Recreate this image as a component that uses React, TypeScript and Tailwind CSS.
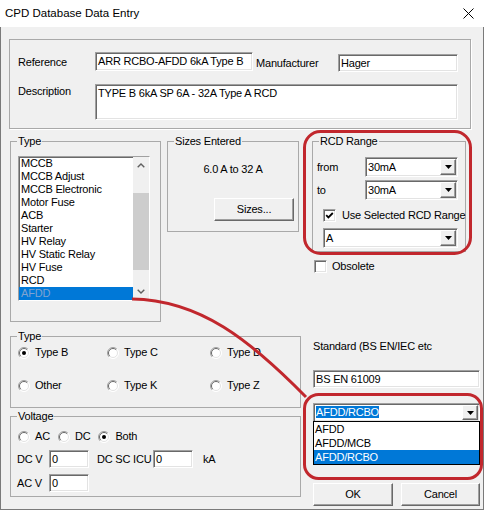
import React from "react";

const sunken =
  "border border-t-[#a0a0a0] border-l-[#a0a0a0] border-b-white border-r-white shadow-[inset_1px_1px_0_#696969,inset_-1px_-1px_0_#e3e3e3]";
const raised =
  "border border-t-white border-l-white border-r-[#696969] border-b-[#696969] shadow-[inset_-1px_-1px_0_#a0a0a0]";

const listItems = [
  "MCCB",
  "MCCB Adjust",
  "MCCB Electronic",
  "Motor Fuse",
  "ACB",
  "Starter",
  "HV Relay",
  "HV Static Relay",
  "HV Fuse",
  "RCD",
];

function Group({
  label,
  className = "",
  children,
}: {
  label?: string;
  className?: string;
  children?: React.ReactNode;
}) {
  return (
    <fieldset className={`border border-[#a9a9a9] ${className}`}>
      {label && <legend className="ml-[6px] px-[1px] leading-[13px]">{label}</legend>}
      {children}
    </fieldset>
  );
}

function TextBox({ className = "", value }: { className?: string; value: string }) {
  return (
    <div className={`${sunken} bg-white flex items-center pl-[2px] whitespace-nowrap overflow-hidden ${className}`}>
      {value}
    </div>
  );
}

function DropButton() {
  return (
    <div className={`${raised} w-[16px] h-full bg-[#f0f0f0] flex items-center justify-center`}>
      <svg width="7" height="4" viewBox="0 0 7 4">
        <path d="M0 0H7L3.5 4Z" fill="#000" />
      </svg>
    </div>
  );
}

function Combo({ className = "", value, selected }: { className?: string; value: string; selected?: boolean }) {
  return (
    <div className={`${sunken} bg-white flex items-center p-[1px] ${className}`}>
      <div className="flex-1 pl-[1px] whitespace-nowrap">
        {selected ? <span className="bg-[#0078d7] text-white">{value}</span> : value}
      </div>
      <DropButton />
    </div>
  );
}

function Radio({ checked }: { checked?: boolean }) {
  return (
    <svg width="12" height="12" viewBox="0 0 12 12" className="shrink-0">
      <circle cx="6" cy="6" r="5.5" fill="#fff" />
      <path d="M9.9 2.1A5.5 5.5 0 0 0 2.1 9.9" stroke="#a0a0a0" fill="none" />
      <path d="M2.1 9.9A5.5 5.5 0 0 0 9.9 2.1" stroke="#ffffff" fill="none" />
      <path d="M9.2 2.8A4.5 4.5 0 0 0 2.8 9.2" stroke="#696969" fill="none" />
      <path d="M2.8 9.2A4.5 4.5 0 0 0 9.2 2.8" stroke="#e3e3e3" fill="none" />
      {checked && <circle cx="6" cy="6" r="2" fill="#000" />}
    </svg>
  );
}

function RadioItem({ label, checked, className = "" }: { label: string; checked?: boolean; className?: string }) {
  return (
    <div className={`flex items-center gap-[5px] h-[13px] whitespace-nowrap ${className}`}>
      <Radio checked={checked} />
      <span>{label}</span>
    </div>
  );
}

function CheckBox({ checked }: { checked?: boolean }) {
  return (
    <div className={`${sunken} bg-white w-[13px] h-[13px] shrink-0 flex items-center justify-center`}>
      {checked && (
        <svg width="9" height="9" viewBox="0 0 9 9">
          <path d="M1.2 4.2L3.4 6.4L7.8 2" stroke="#000" strokeWidth="1.8" fill="none" />
        </svg>
      )}
    </div>
  );
}

function Button({ label, className = "" }: { label: string; className?: string }) {
  return (
    <div className={`${raised} bg-[#f0f0f0] h-[23px] flex items-center justify-center ${className}`}>{label}</div>
  );
}

function ListBox() {
  return (
    <div className={`${sunken} bg-white w-[132px] h-[145px] flex`}>
      <div className="flex-1 flex flex-col">
        {listItems.map((item) => (
          <div key={item} className="h-[13px] leading-[13px] pl-[2px] whitespace-nowrap">
            {item}
          </div>
        ))}
        <div className="h-[13px] leading-[13px] pl-[2px] bg-[#0078d7] text-[#7fa3cf]">AFDD</div>
      </div>
      <div className="w-[16px] bg-[#f0f0f0] flex flex-col">
        <div className="h-[17px] flex items-center justify-center">
          <svg width="8" height="5" viewBox="0 0 8 5">
            <path d="M0.7 4.3L4 1L7.3 4.3" stroke="#606060" strokeWidth="1.4" fill="none" />
          </svg>
        </div>
        <div className="h-[19px]" />
        <div className="h-[77px] bg-[#cdcdcd]" />
        <div className="flex-1" />
        <div className="h-[17px] flex items-center justify-center">
          <svg width="8" height="5" viewBox="0 0 8 5">
            <path d="M0.7 0.7L4 4L7.3 0.7" stroke="#606060" strokeWidth="1.4" fill="none" />
          </svg>
        </div>
      </div>
    </div>
  );
}

export default function App() {
  return (
    <div className="relative w-[484px] h-[510px] flex flex-col overflow-hidden text-[11px] leading-[13px] tracking-[-0.2px] text-black font-['Liberation_Sans',Arial,sans-serif]">
      {/* title bar */}
      <div className="h-[27px] bg-white flex items-center justify-between pl-[5px] pr-[10px]">
        <span className="text-[11.5px] tracking-normal">CPD Database Data Entry</span>
        <svg width="11" height="11" viewBox="0 0 11 11">
          <path d="M0.5 0.5L10.5 10.5M10.5 0.5L0.5 10.5" stroke="#000" strokeWidth="1" />
        </svg>
      </div>

      <div className="flex-1 bg-[#f0f0f0] border-l border-r border-b border-[#7a7a7a] pl-[8px]">
        {/* reference / description */}
        <div className="mt-[12px] w-[462px] h-[90px] border border-[#a9a9a9] shadow-[1px_1px_0_white] pl-[8px] pt-[12px]">
          <div className="flex items-start">
            <div className="w-[77px] mt-[4px]">Reference</div>
            <TextBox className="w-[158px] h-[19px]" value="ARR RCBO-AFDD 6kA Type B" />
            <div className="ml-[3px] w-[82px] mt-[5px]">Manufacturer</div>
            <TextBox className="w-[120px] h-[18px] mt-[2px]" value="Hager" />
          </div>
          <div className="flex items-start mt-[12px]">
            <div className="w-[77px] mt-[1px]">Description</div>
            <div className={`${sunken} bg-white w-[363px] h-[36px] pl-[2px] pt-[2px]`}>
              TYPE B 6kA SP 6A - 32A Type A RCD
            </div>
          </div>
        </div>

        {/* type list, sizes, rcd range */}
        <div className="flex items-start mt-[6px] ml-[1px]">
          <Group label="Type" className="w-[151px] h-[187px]">
            <div className="pl-[7px] pt-[8px]">
              <ListBox />
            </div>
          </Group>

          <Group label="Sizes Entered" className="ml-[6px] w-[132px] h-[97px]">
            <div className="flex flex-col items-center">
              <div className="mt-[15px]">6.0 A to 32 A</div>
              <Button label="Sizes..." className="mt-[22px] w-[80px] self-end mr-[4px]" />
            </div>
          </Group>

          <div className="ml-[13px] flex flex-col">
            <Group label="RCD Range" className="w-[154px] h-[117px]">
              <div className="pl-[4px] pt-[9px]">
                <div className="flex items-center">
                  <div className="w-[48px]">from</div>
                  <Combo className="w-[93px] h-[20px]" value="30mA" />
                </div>
                <div className="flex items-center mt-[3px]">
                  <div className="w-[48px]">to</div>
                  <Combo className="w-[93px] h-[20px]" value="30mA" />
                </div>
                <div className="flex items-center gap-[6px] mt-[9px] ml-[6px] h-[13px] whitespace-nowrap">
                  <CheckBox checked />
                  <span>Use Selected RCD Range</span>
                </div>
                <Combo className="mt-[6px] ml-[6px] w-[135px] h-[20px]" value="A" />
              </div>
            </Group>
            <div className="flex items-center gap-[5px] mt-[8px] ml-[2px] h-[13px]">
              <CheckBox />
              <span>Obsolete</span>
            </div>
          </div>
        </div>

        {/* type radios, voltage, standard */}
        <div className="flex items-start mt-[8px] ml-[1px]">
          <div className="w-[291px] flex flex-col">
            <Group label="Type" className="h-[78px]">
              <div className="pl-[7px] pt-[3px] grid grid-cols-[89px_103px_80px] gap-y-[20px]">
                <RadioItem label="Type B" checked />
                <RadioItem label="Type C" />
                <RadioItem label="Type D" />
                <RadioItem label="Other" />
                <RadioItem label="Type K" />
                <RadioItem label="Type Z" />
              </div>
            </Group>

            <Group label="Voltage" className="mt-[2px] h-[87px]">
              <div className="pl-[7px] pt-[7px]">
                <div className="flex items-center">
                  <RadioItem label="AC" />
                  <RadioItem label="DC" className="ml-[8px]" />
                  <RadioItem label="Both" checked className="ml-[8px]" />
                </div>
                <div className="flex items-center mt-[7px] ml-[-1px] whitespace-nowrap">
                  <div className="w-[32px] shrink-0">DC V</div>
                  <TextBox className="w-[40px] h-[18px] shrink-0" value="0" />
                  <div className="ml-[8px] w-[56px] shrink-0">DC SC ICU</div>
                  <TextBox className="w-[40px] h-[18px] shrink-0" value="0" />
                  <div className="ml-[10px]">kA</div>
                </div>
                <div className="flex items-center mt-[6px] ml-[-1px] whitespace-nowrap">
                  <div className="w-[32px] shrink-0">AC V</div>
                  <TextBox className="w-[40px] h-[18px] shrink-0" value="0" />
                </div>
              </div>
            </Group>
          </div>

          <div className="ml-[11px] pl-[1px] w-[168px] flex flex-col">
            <div className="mt-[10px] whitespace-nowrap">Standard (BS EN/IEC etc</div>
            <TextBox className="mt-[17px] w-[167px] h-[18px]" value="BS EN 61009" />
            <Combo className="mt-[15px] w-[167px] h-[19px]" value="AFDD/RCBO" selected />
            <div className="mt-[-1px] w-[167px] h-[44px] border border-black bg-white">
              <div className="h-[14px] leading-[14px] pl-[1px]">AFDD</div>
              <div className="h-[14px] leading-[14px] pl-[1px]">AFDD/MCB</div>
              <div className="h-[14px] leading-[14px] pl-[1px] bg-[#0078d7] text-white">AFDD/RCBO</div>
            </div>
            <div className="flex gap-[8px] mt-[18px]">
              <Button label="OK" className="w-[80px]" />
              <Button label="Cancel" className="w-[79px]" />
            </div>
          </div>
        </div>
      </div>

      {/* red annotations */}
      <svg className="absolute left-0 top-0 pointer-events-none" width="484" height="510" viewBox="0 0 484 510">
        <rect x="304.5" y="131.5" width="166" height="122" rx="16" fill="none" stroke="#c1272d" strokeWidth="3" />
        <rect x="304.5" y="394.5" width="177" height="84" rx="14" fill="none" stroke="#c1272d" strokeWidth="3" />
        <path d="M132 299C200 300 250 340 306 397" fill="none" stroke="#c1272d" strokeWidth="3" />
      </svg>
    </div>
  );
}
